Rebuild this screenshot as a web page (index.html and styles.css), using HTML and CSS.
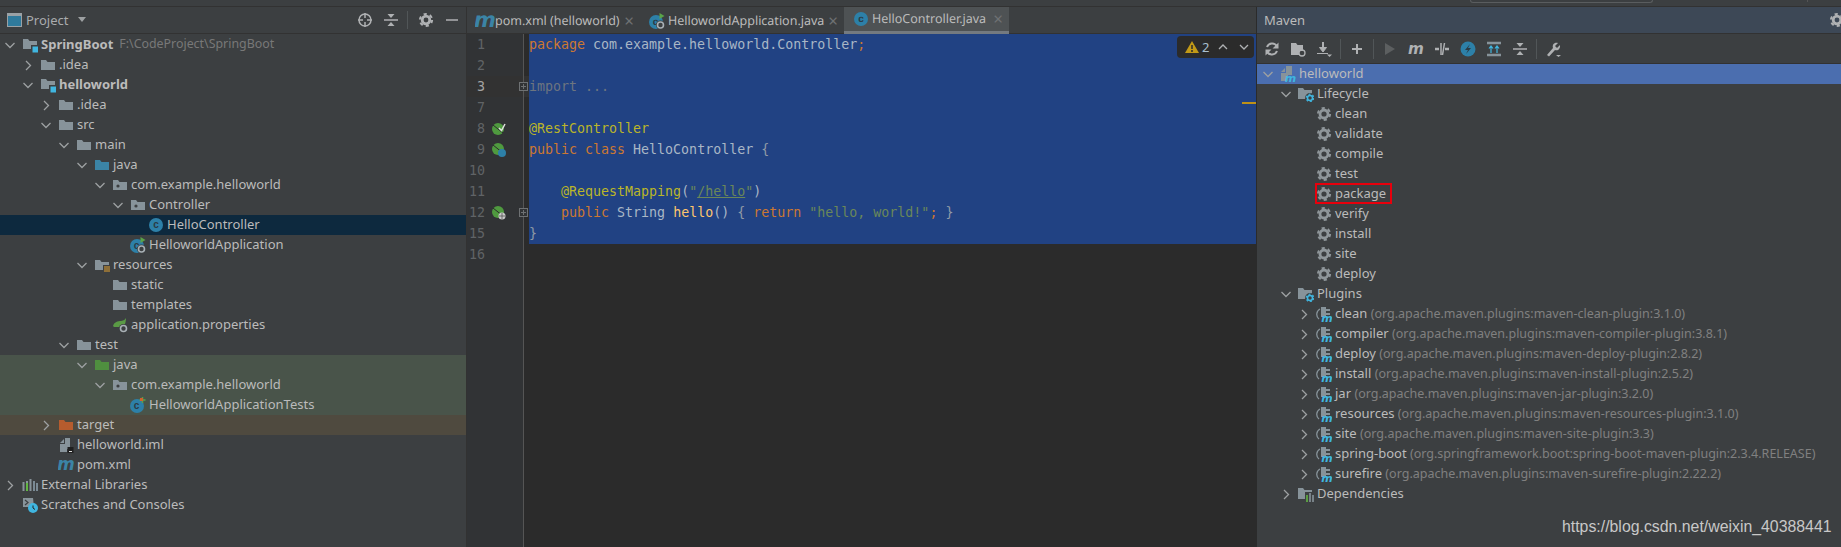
FILE: index.html
```html
<!DOCTYPE html>
<html lang="en">
<head>
<meta charset="utf-8">
<title>HelloController.java</title>
<link rel="stylesheet" href="styles.css">
</head>
<body>
<svg class="defs" xmlns="http://www.w3.org/2000/svg">
  <symbol id="cr" viewBox="0 0 16 16"><path d="M6 4l4.5 4.5L6 13" fill="none" stroke="#9da0a2" stroke-width="1.3"/></symbol>
  <symbol id="cd" viewBox="0 0 16 16"><path d="M3.5 6l4.5 4.5L12.500 6" fill="none" stroke="#9da0a2" stroke-width="1.3"/></symbol>
  <symbol id="folder" viewBox="0 0 16 16"><path d="M1 3h5l1.500 2H15v8H1z" fill="#87939a"/></symbol>
  <symbol id="fblue" viewBox="0 0 16 16"><path d="M1 3h5l1.500 2H15v8H1z" fill="#3b84a6"/></symbol>
  <symbol id="fgreen" viewBox="0 0 16 16"><path d="M1 3h5l1.500 2H15v8H1z" fill="#4f8f3f"/></symbol>
  <symbol id="forange" viewBox="0 0 16 16"><path d="M1 3h5l1.500 2H15v8H1z" fill="#b65c2e"/></symbol>
  <symbol id="pkg" viewBox="0 0 16 16"><path d="M1 3h5l1.500 2H15v8H1z" fill="#87939a"/><circle cx="6" cy="9" r="1.600" fill="#3c3f41"/></symbol>
  <symbol id="module" viewBox="0 0 16 16"><path d="M1 2h5l1.500 2H15v8H1z" fill="#87939a"/><rect x="9" y="8" width="8" height="8" fill="#3c3f41"/><rect x="10.500" y="9.500" width="6" height="6" fill="#40b6e0"/></symbol>
  <symbol id="res" viewBox="0 0 16 16"><path d="M1 3h5l1.500 2H15v8H1z" fill="#87939a"/><rect x="9" y="8" width="8" height="8" fill="#3c3f41"/><path d="M10 10h6M10 12h6M10 14h6" stroke="#e0a030" stroke-width="1"/></symbol>
  <symbol id="cls" viewBox="0 0 16 16"><circle cx="8" cy="8" r="7" fill="#2d80a8"/><text x="8" y="11" text-anchor="middle" font-size="10" font-family="Liberation Sans,sans-serif" font-weight="bold" fill="#2b3b45">c</text></symbol>
  <symbol id="clsrun" viewBox="0 0 16 16"><circle cx="7" cy="9" r="7" fill="#2d80a8"/><text x="6.500" y="12" text-anchor="middle" font-size="10" font-family="Liberation Sans,sans-serif" font-weight="bold" fill="#2b3b45">c</text><path d="M10.500 0l5 3-5 3z" fill="#5aa34a"/><circle cx="11.500" cy="12" r="4.500" fill="#3c3f41"/><circle cx="11.500" cy="12" r="3" fill="none" stroke="#a8b0b5" stroke-width="1.600"/></symbol>
  <symbol id="clstest" viewBox="0 0 16 16"><circle cx="7" cy="9" r="7" fill="#2d80a8"/><text x="6.500" y="12" text-anchor="middle" font-size="10" font-family="Liberation Sans,sans-serif" font-weight="bold" fill="#2b3b45">c</text><path d="M9.500 3h6M12.500 0v6" stroke="#5aa34a" stroke-width="1.500"/><rect x="10" y="1" width="3" height="3" fill="#d0622e"/></symbol>
  <symbol id="spring" viewBox="0 0 16 16"><path d="M1 9c1-4 5-5 8-5 3-.5 4-1.500 5-3 0 4-1 9-5 9H2z" fill="#5a9a45"/><circle cx="11.500" cy="11.500" r="4.500" fill="#3c3f41"/><circle cx="11.500" cy="11.500" r="3" fill="none" stroke="#a8b0b5" stroke-width="1.600"/></symbol>
  <symbol id="iml" viewBox="0 0 16 16"><path d="M2 6l4-4v4zM7 1h5v11H9v3H2V7h5z" fill="#87939a"/><rect x="9.500" y="10" width="6" height="6" fill="#1f1f1f"/><path d="M11 14.500h3" stroke="#ddd"/></symbol>
  <symbol id="m" viewBox="0 0 20 16"><text x="10" y="14" text-anchor="middle" font-size="21" font-family="DejaVu Sans,sans-serif" font-style="italic" font-weight="bold" fill="#3b84a6">m</text></symbol>
  <symbol id="libs" viewBox="0 0 16 16"><path d="M1.500 5v9M5 4v10M8.500 2v12" stroke="#87939a" stroke-width="2"/><path d="M5 6v8" stroke="#62b543" stroke-width="2"/><path d="M12 4v10M15 6v8" stroke="#7a8a94" stroke-width="2"/></symbol>
  <symbol id="scr" viewBox="0 0 16 16"><path d="M1 1h10l1 9H1z" fill="#87939a"/><path d="M3 3l3 2.500L3 8" fill="none" stroke="#3c3f41" stroke-width="1.200"/></symbol>
  <symbol id="gear" viewBox="0 0 16 16"><circle cx="8" cy="8" r="4" fill="none" stroke="#8f969a" stroke-width="2.800"/><circle cx="8" cy="8" r="6.100" fill="none" stroke="#8f969a" stroke-width="2" stroke-dasharray="3.200 3.190"/></symbol>
  <symbol id="lc" viewBox="0 0 16 16"><path d="M0 2h5l1.500 2H14v9H0z" fill="#87939a"/><circle cx="12" cy="12" r="5" fill="#3c3f41"/><circle cx="12" cy="12" r="2.500" fill="none" stroke="#40b6e0" stroke-width="1.500"/><circle cx="12" cy="12" r="3.800" fill="none" stroke="#40b6e0" stroke-width="1.200" stroke-dasharray="2 2"/></symbol>
  <symbol id="dep" viewBox="0 0 16 16"><path d="M0 2h5l1.500 2H14v9H0z" fill="#87939a"/><rect x="7" y="6" width="9" height="10" fill="#3c3f41"/><path d="M9 9v7" stroke="#62b543" stroke-width="1.600"/><path d="M12 7v9M15 9v7" stroke="#87939a" stroke-width="1.600"/></symbol>
  <symbol id="mod" viewBox="0 0 16 16"><path d="M1 6l4-4v4zM6 0h6v9H8v6H1V7h5z" fill="#87939a"/><text x="10.500" y="15.500" text-anchor="middle" font-size="11" font-family="DejaVu Sans,sans-serif" font-style="italic" font-weight="bold" fill="#40b6e0">m</text></symbol>
  <symbol id="plug" viewBox="0 0 16 16"><path d="M4 3a6 6 0 0 0-1 10" fill="none" stroke="#87939a" stroke-width="1.300"/><path d="M5 1h5v2h4v2h-4v2h4v2h-4v2H5z" fill="#87939a"/><text x="11" y="16" text-anchor="middle" font-size="11" font-family="DejaVu Sans,sans-serif" font-style="italic" font-weight="bold" fill="#40b6e0">m</text></symbol>
  <symbol id="wingear" viewBox="0 0 16 16"><circle cx="8" cy="8" r="3.800" fill="none" stroke="#afb1b3" stroke-width="2.800"/><circle cx="8" cy="8" r="6.100" fill="none" stroke="#afb1b3" stroke-width="2" stroke-dasharray="3.200 3.190"/></symbol>
  <symbol id="collapse" viewBox="0 0 16 16"><path d="M1 8h14" stroke="#afb1b3" stroke-width="1.500"/><path d="M8 6L4.500 2h7zM8 10l-3.500 4h7z" fill="#afb1b3"/></symbol>
  <symbol id="sync" viewBox="0 0 16 16"><path d="M13 5.500A5.500 5.500 0 0 0 3 6M3 10.500A5.500 5.500 0 0 0 13 10" fill="none" stroke="#afb1b3" stroke-width="2"/><path d="M14.500 1.500v6h-6zM1.500 14.500v-6h6z" fill="#afb1b3"/></symbol>
  <symbol id="gut1" viewBox="0 0 14 14"><circle cx="6" cy="7" r="6" fill="#4f9a3f"/><path d="M1 3l10 8" stroke="#2b2b2b" stroke-width="1"/><path d="M7 6l2.500 2.500L13 2" fill="none" stroke="#e0e0e0" stroke-width="1.500"/></symbol>
  <symbol id="gut2" viewBox="0 0 14 14"><circle cx="6" cy="6" r="6" fill="#4f9a3f"/><path d="M1 2l10 8" stroke="#2b2b2b" stroke-width="1"/><circle cx="10" cy="10" r="4" fill="#2d80a8"/></symbol>
  <symbol id="gut3" viewBox="0 0 14 14"><circle cx="6" cy="6" r="6" fill="#4f9a3f"/><path d="M1 2l10 8" stroke="#2b2b2b" stroke-width="1"/><circle cx="10" cy="10" r="3.500" fill="#c8c8c8"/><path d="M7 10h6M10 7v6" stroke="#555" stroke-width=".8"/></symbol>
</svg>

<div class="strip"><span class="searchbox"></span><span class="tick"></span></div>
<div class="main">
  <aside class="project">
    <header class="phead">
      <svg class="winicon" width="15" height="14" viewBox="0 0 15 14"><rect x=".5" y=".5" width="14" height="13" fill="#2f7a9c" stroke="#9aa1a5"/><rect x="1" y="1" width="13" height="2" fill="#9aa1a5"/></svg>
      <span class="ptitle">Project</span>
      <svg class="caret" width="10" height="6" viewBox="0 0 10 6"><path d="M1 0h8L5 5z" fill="#9da0a2"/></svg>
      <span class="grow"></span>
      <svg class="hbtn" width="16" height="16" viewBox="0 0 16 16"><circle cx="8" cy="8" r="6" fill="none" stroke="#afb1b3" stroke-width="1.500"/><path d="M8 1v5M8 10v5M1 8h5M10 8h5" stroke="#afb1b3" stroke-width="1.500"/></svg>
      <svg class="hbtn" width="16" height="16"><use href="#collapse"/></svg>
      <span class="hsep"></span>
      <svg class="hbtn" width="16" height="16"><use href="#wingear"/></svg>
      <svg class="hbtn" width="16" height="16" viewBox="0 0 16 16"><path d="M2 8h12" stroke="#afb1b3" stroke-width="1.500"/></svg>
    </header>
    <div class="ptree">
      <div class="row d0"><svg class="ar"><use href="#cd"/></svg><svg class="ic"><use href="#module"/></svg><b>SpringBoot</b><span class="path">F:\CodeProject\SpringBoot</span></div>
      <div class="row d1"><svg class="ar"><use href="#cr"/></svg><svg class="ic"><use href="#folder"/></svg><span>.idea</span></div>
      <div class="row d1"><svg class="ar"><use href="#cd"/></svg><svg class="ic"><use href="#module"/></svg><b>helloworld</b></div>
      <div class="row d2"><svg class="ar"><use href="#cr"/></svg><svg class="ic"><use href="#folder"/></svg><span>.idea</span></div>
      <div class="row d2"><svg class="ar"><use href="#cd"/></svg><svg class="ic"><use href="#folder"/></svg><span>src</span></div>
      <div class="row d3"><svg class="ar"><use href="#cd"/></svg><svg class="ic"><use href="#folder"/></svg><span>main</span></div>
      <div class="row d4"><svg class="ar"><use href="#cd"/></svg><svg class="ic"><use href="#fblue"/></svg><span>java</span></div>
      <div class="row d5"><svg class="ar"><use href="#cd"/></svg><svg class="ic"><use href="#pkg"/></svg><span>com.example.helloworld</span></div>
      <div class="row d6"><svg class="ar"><use href="#cd"/></svg><svg class="ic"><use href="#pkg"/></svg><span>Controller</span></div>
      <div class="row d7 selrow"><i class="ar"></i><svg class="ic"><use href="#cls"/></svg><span>HelloController</span></div>
      <div class="row d6"><i class="ar"></i><svg class="ic"><use href="#clsrun"/></svg><span>HelloworldApplication</span></div>
      <div class="row d4"><svg class="ar"><use href="#cd"/></svg><svg class="ic"><use href="#res"/></svg><span>resources</span></div>
      <div class="row d5"><i class="ar"></i><svg class="ic"><use href="#folder"/></svg><span>static</span></div>
      <div class="row d5"><i class="ar"></i><svg class="ic"><use href="#folder"/></svg><span>templates</span></div>
      <div class="row d5"><i class="ar"></i><svg class="ic"><use href="#spring"/></svg><span>application.properties</span></div>
      <div class="row d3"><svg class="ar"><use href="#cd"/></svg><svg class="ic"><use href="#folder"/></svg><span>test</span></div>
      <div class="row d4 testrow"><svg class="ar"><use href="#cd"/></svg><svg class="ic"><use href="#fgreen"/></svg><span>java</span></div>
      <div class="row d5 testrow"><svg class="ar"><use href="#cd"/></svg><svg class="ic"><use href="#pkg"/></svg><span>com.example.helloworld</span></div>
      <div class="row d6 testrow"><i class="ar"></i><svg class="ic"><use href="#clstest"/></svg><span>HelloworldApplicationTests</span></div>
      <div class="row d2 excrow"><svg class="ar"><use href="#cr"/></svg><svg class="ic"><use href="#forange"/></svg><span>target</span></div>
      <div class="row d2"><i class="ar"></i><svg class="ic"><use href="#iml"/></svg><span>helloworld.iml</span></div>
      <div class="row d2"><i class="ar"></i><svg class="ic"><use href="#m"/></svg><span>pom.xml</span></div>
      <div class="row d0"><svg class="ar"><use href="#cr"/></svg><svg class="ic"><use href="#libs"/></svg><span>External Libraries</span></div>
      <div class="row d0"><i class="ar"></i><svg class="ic wide"><use href="#scr"/><circle cx="11" cy="11" r="5" fill="#40b6e0"/><path d="M11 8.500V11l2 1.500" fill="none" stroke="#222" stroke-width="1"/></svg><span>Scratches and Consoles</span></div>
    </div>
  </aside>

  <section class="editor">
    <nav class="tabs">
      <div class="tab tab1"><svg class="tabm"><use href="#m"/></svg><span>pom.xml (helloworld)</span><span class="x">×</span></div>
      <div class="tab tab2"><svg class="ic"><use href="#clsrun"/></svg><span>HelloworldApplication.java</span><span class="x">×</span></div>
      <div class="tab tab3 active"><svg class="ic"><use href="#cls"/></svg><span>HelloController.java</span><span class="x">×</span></div>
    </nav>
    <div class="edit">
      <div class="gutter">
        <div class="gl"><span class="ln">1</span></div>
        <div class="gl"><span class="ln">2</span></div>
        <div class="gl cur"><span class="ln">3</span><span class="fold"></span></div>
        <div class="gl"><span class="ln">7</span></div>
        <div class="gl"><span class="ln">8</span><svg class="gi"><use href="#gut1"/></svg></div>
        <div class="gl"><span class="ln">9</span><svg class="gi"><use href="#gut2"/></svg></div>
        <div class="gl"><span class="ln">10</span></div>
        <div class="gl"><span class="ln">11</span></div>
        <div class="gl"><span class="ln">12</span><svg class="gi"><use href="#gut3"/></svg><span class="fold"></span></div>
        <div class="gl"><span class="ln">15</span></div>
        <div class="gl"><span class="ln">16</span></div>
      </div>
      <div class="code">
        <div class="sel">
<div class="cl"><span class="kw">package</span> com.example.helloworld.Controller<span class="kw">;</span></div>
<div class="cl"></div>
<div class="cl"><span class="dim">import ...</span></div>
<div class="cl"></div>
<div class="cl"><span class="an">@RestController</span></div>
<div class="cl"><span class="kw">public class</span> HelloController <span class="br">{</span></div>
<div class="cl"></div>
<div class="cl">    <span class="an">@RequestMapping</span>(<span class="st">"<u>/hello</u>"</span>)</div>
<div class="cl">    <span class="kw">public</span> String <span class="fn">hello</span>() <span class="br">{</span> <span class="kw">return</span> <span class="st">"hello, world!"</span><span class="kw">;</span> <span class="br">}</span></div>
<div class="cl"><span class="br">}</span></div>
        </div>
      </div>
      <div class="warn">
        <svg width="14" height="12" viewBox="0 0 14 12"><path d="M7 0l7 12H0z" fill="#c29a17"/><path d="M7 4v4M7 9v2" stroke="#2b2b2b" stroke-width="1.500"/></svg>
        <span class="wn">2</span>
        <svg class="wup" width="10" height="6" viewBox="0 0 10 6"><path d="M1 5l4-4 4 4" fill="none" stroke="#afb1b3" stroke-width="1.300"/></svg>
        <svg class="wdn" width="10" height="6" viewBox="0 0 10 6"><path d="M1 1l4 4 4-4" fill="none" stroke="#afb1b3" stroke-width="1.300"/></svg>
      </div>
      <span class="mark"></span>
    </div>
  </section>

  <aside class="maven">
    <header class="mhead"><span>Maven</span><span class="grow"></span><svg class="mgear" width="16" height="16"><use href="#wingear"/></svg></header>
    <div class="mtools">
      <svg class="tb"><use href="#sync"/></svg>
      <svg class="tb" viewBox="0 0 16 16"><path d="M1 2h5l1.500 2H13v6H9v4H1z" fill="#afb1b3"/><circle cx="12" cy="12" r="3" fill="none" stroke="#afb1b3" stroke-width="1.300"/></svg>
      <svg class="tb" viewBox="0 0 16 16"><path d="M7 1v8" stroke="#afb1b3" stroke-width="2"/><path d="M3.500 6.500h7L7 11zM1 12.500h11" stroke="#afb1b3" fill="#afb1b3"/><path d="M11 13.500h5L13.500 16z" fill="#afb1b3"/></svg>
      <span class="tsep"></span>
      <svg class="tb" viewBox="0 0 16 16"><path d="M8 3v10M3 8h10" stroke="#afb1b3" stroke-width="2"/></svg>
      <span class="tsep"></span>
      <svg class="tb" viewBox="0 0 16 16"><path d="M3 2l10 6-10 6z" fill="#5c5f60"/></svg>
      <svg class="tb" viewBox="0 0 20 16"><text x="10" y="14" text-anchor="middle" font-size="19" font-family="DejaVu Sans,sans-serif" font-style="italic" font-weight="bold" fill="#afb1b3">m</text></svg>
      <svg class="tb" viewBox="0 0 16 16"><path d="M1 8h4M11 8h4" stroke="#afb1b3" stroke-width="2.500"/><path d="M7 2v12M10.500 2L8.500 14" stroke="#afb1b3" stroke-width="1.500"/></svg>
      <svg class="tb" viewBox="0 0 16 16"><circle cx="8" cy="8" r="7.500" fill="#2d80a8"/><path d="M10 3L5 9h3l-2 4 5-6H8z" fill="#2b3b45"/></svg>
      <svg class="tb" viewBox="0 0 16 16"><path d="M1 2h14M1 14h14" stroke="#87939a" stroke-width="2.500"/><path d="M5 12V6M3 7.500L5 5l2 2.500M11 12V6M9 7.500L11 5l2 2.500" fill="none" stroke="#40b6e0" stroke-width="1.200"/></svg>
      <svg class="tb"><use href="#collapse"/></svg>
      <span class="tsep"></span>
      <svg class="tb" viewBox="0 0 16 16"><path d="M2 14l6-7c-1-3 1-6 5-5l-3 3 2 2 3-3c.5 4-2 6-5 5l-6 6.500z" fill="#afb1b3"/><path d="M11 14h5l-2.500 2z" fill="#afb1b3"/></svg>
    </div>
    <div class="mtree">
      <div class="row m0 msel"><svg class="ar"><use href="#cd"/></svg><svg class="ic"><use href="#mod"/></svg><span>helloworld</span></div>
      <div class="row m1"><svg class="ar"><use href="#cd"/></svg><svg class="ic"><use href="#lc"/></svg><span>Lifecycle</span></div>
      <div class="row m2"><i class="ar"></i><svg class="ic"><use href="#gear"/></svg><span>clean</span></div>
      <div class="row m2"><i class="ar"></i><svg class="ic"><use href="#gear"/></svg><span>validate</span></div>
      <div class="row m2"><i class="ar"></i><svg class="ic"><use href="#gear"/></svg><span>compile</span></div>
      <div class="row m2"><i class="ar"></i><svg class="ic"><use href="#gear"/></svg><span>test</span></div>
      <div class="row m2"><i class="ar"></i><svg class="ic"><use href="#gear"/></svg><span>package</span><em class="redbox"></em></div>
      <div class="row m2"><i class="ar"></i><svg class="ic"><use href="#gear"/></svg><span>verify</span></div>
      <div class="row m2"><i class="ar"></i><svg class="ic"><use href="#gear"/></svg><span>install</span></div>
      <div class="row m2"><i class="ar"></i><svg class="ic"><use href="#gear"/></svg><span>site</span></div>
      <div class="row m2"><i class="ar"></i><svg class="ic"><use href="#gear"/></svg><span>deploy</span></div>
      <div class="row m1"><svg class="ar"><use href="#cd"/></svg><svg class="ic"><use href="#lc"/></svg><span>Plugins</span></div>
      <div class="row m2"><svg class="ar"><use href="#cr"/></svg><svg class="ic"><use href="#plug"/></svg><span>clean <small>(org.apache.maven.plugins:maven-clean-plugin:3.1.0)</small></span></div>
      <div class="row m2"><svg class="ar"><use href="#cr"/></svg><svg class="ic"><use href="#plug"/></svg><span>compiler <small>(org.apache.maven.plugins:maven-compiler-plugin:3.8.1)</small></span></div>
      <div class="row m2"><svg class="ar"><use href="#cr"/></svg><svg class="ic"><use href="#plug"/></svg><span>deploy <small>(org.apache.maven.plugins:maven-deploy-plugin:2.8.2)</small></span></div>
      <div class="row m2"><svg class="ar"><use href="#cr"/></svg><svg class="ic"><use href="#plug"/></svg><span>install <small>(org.apache.maven.plugins:maven-install-plugin:2.5.2)</small></span></div>
      <div class="row m2"><svg class="ar"><use href="#cr"/></svg><svg class="ic"><use href="#plug"/></svg><span>jar <small>(org.apache.maven.plugins:maven-jar-plugin:3.2.0)</small></span></div>
      <div class="row m2"><svg class="ar"><use href="#cr"/></svg><svg class="ic"><use href="#plug"/></svg><span>resources <small>(org.apache.maven.plugins:maven-resources-plugin:3.1.0)</small></span></div>
      <div class="row m2"><svg class="ar"><use href="#cr"/></svg><svg class="ic"><use href="#plug"/></svg><span>site <small>(org.apache.maven.plugins:maven-site-plugin:3.3)</small></span></div>
      <div class="row m2"><svg class="ar"><use href="#cr"/></svg><svg class="ic"><use href="#plug"/></svg><span>spring-boot <small>(org.springframework.boot:spring-boot-maven-plugin:2.3.4.RELEASE)</small></span></div>
      <div class="row m2"><svg class="ar"><use href="#cr"/></svg><svg class="ic"><use href="#plug"/></svg><span>surefire <small>(org.apache.maven.plugins:maven-surefire-plugin:2.22.2)</small></span></div>
      <div class="row m1"><svg class="ar"><use href="#cr"/></svg><svg class="ic"><use href="#dep"/></svg><span>Dependencies</span></div>
    </div>
    <span class="watermark">https://blog.csdn.net/weixin_40388441</span>
  </aside>
</div>
</body>
</html>
```
FILE: styles.css
```css
* { box-sizing: border-box; }
html, body { margin: 0; height: 547px; width: 1841px; overflow: hidden; }
body { background: #3c3f41; color: #bbbbbb; font: 13px/20px "Noto Sans", sans-serif; }
.defs { display: none; }
.grow { flex: 1; }

.strip { height: 7px; border-bottom: 1px solid #323232; display: flex; align-items: flex-start; }
.searchbox { margin-left: 1470px; width: 183px; height: 3px; border: 1px solid #5a5d5f; border-top: 0; border-radius: 0 0 3px 3px; }
.tick { margin-left: 154px; width: 1px; height: 2px; background: #555; }
.main { display: flex; height: 540px; }

.project { width: 467px; border-right: 1px solid #323232; flex: none; }
.phead { height: 27px; border-bottom: 1px solid #323232; display: flex; align-items: center; padding: 0 6px 0 7px; }
.winicon { margin-right: 4px; }
.ptitle { color: #a9abad; }
.caret { margin-left: 9px; }
.hbtn { margin-left: 10px; }
.hsep { width: 1px; height: 18px; background: #515658; margin: 0 0 0 8px; }
.ptree { padding-top: 1px; }

.row { display: flex; align-items: center; height: 20px; white-space: pre; position: relative; }
.row > span, .row > b { margin-bottom: 2px; }
.ar { width: 16px; height: 16px; margin-right: 4px; flex: none; }
.ic { width: 16px; height: 16px; margin-right: 3px; flex: none; overflow: visible; }
.d0 { padding-left: 2px; }
.d1 { padding-left: 20px; }
.d2 { padding-left: 38px; }
.d3 { padding-left: 56px; }
.d4 { padding-left: 74px; }
.d5 { padding-left: 92px; }
.d6 { padding-left: 110px; }
.d7 { padding-left: 128px; }
.path { color: #787878; margin-left: 6px; font-size: 12.4px; }
.selrow { background: #0d293e; }
.testrow { background: #49544a; }
.excrow { background: #4f4a3f; }
.row b { font-weight: 700; }

.editor { width: 790px; flex: none; border-right: 1px solid #2b2b2b; display: flex; flex-direction: column; }
.tabs { height: 27px; display: flex; border-bottom: 1px solid #323232; font-size: 12.5px; text-rendering: geometricPrecision; }
.tab { display: flex; align-items: center; height: 27px; flex: none; white-space: nowrap; }
.tab1 { width: 173px; padding-left: 8px; }
.tab2 { width: 204px; padding-left: 9px; }
.tab3 { width: 165px; padding-left: 9px; }
.tabm { width: 20px; height: 16px; flex: none; }
.tab .x { color: #6e7173; font-size: 17px; margin-left: auto; margin-right: 6px; }
.active { background: #4e5254; border-bottom: 3px solid #747a80; }
.edit { flex: 1; display: flex; background: #2b2b2b; position: relative; font: 13.3px/21px "DejaVu Sans Mono", monospace; }
.gutter { width: 62px; flex: none; position: relative; background: linear-gradient(90deg, #313335 56px, #2b2b2b 56px); }
.gutter::after { content: ""; position: absolute; left: 56px; top: 0; bottom: 0; width: 1px; background: #555; }
.gl { height: 21px; display: flex; align-items: center; position: relative; }
.cur { background: #323232; }
.ln { width: 18px; text-align: right; color: #606366; flex: none; }
.cur .ln { color: #a4a3a3; }
.gi { width: 14px; height: 14px; margin-left: 7px; flex: none; }
.fold { position: absolute; left: 52px; top: 6px; width: 9px; height: 9px; border: 1px solid #6e7173; background: linear-gradient(#6e7173, #6e7173) center / 5px 1px no-repeat, linear-gradient(#6e7173, #6e7173) center / 1px 5px no-repeat, #313335; z-index: 1; }
.code { flex: 1; }
.sel { background: #214283; color: #a9b7c6; }
.cl { height: 21px; white-space: pre; }
.kw { color: #cc7832; }
.an { color: #bbb529; }
.st { color: #6a8759; }
.fn { color: #ffc66d; }
.dim { color: #6d7580; }
.br { color: #8f9aa6; }
.warn { position: absolute; left: 710px; top: 2px; width: 77px; height: 22px; background: #2b2b2b; border-radius: 4px; display: flex; align-items: center; padding-left: 8px; font: 13px/22px "Noto Sans", sans-serif; color: #a9c0d0; }
.wn { margin-left: 3px; }
.wup { margin-left: 9px; }
.wdn { margin-left: 11px; }
.mark { position: absolute; right: 0; top: 68px; width: 14px; height: 2px; background: #be9117; }

.maven { flex: 1; position: relative; min-width: 0; overflow: hidden; }
.mhead { height: 27px; background: #3d4856; border-bottom: 1px solid #323232; display: flex; align-items: center; padding-left: 7px; }
.mgear { margin-right: -4px; flex: none; }
.mtools { height: 30px; border-bottom: 1px solid #323232; display: flex; align-items: center; padding-left: 2px; }
.tb { width: 16px; height: 16px; margin: 0 5px; flex: none; }
.tsep { width: 1px; height: 20px; background: #515658; flex: none; margin: 0 3px; }
.m0 { padding-left: 3px; }
.m1 { padding-left: 21px; }
.m2 { padding-left: 39px; }
.msel { background: #4b6eaf; }
small { font-size: 12.5px; color: #808080; }
.redbox { position: absolute; left: 58px; top: -1px; width: 77px; height: 21px; border: 2px solid #e8000c; }
.watermark { position: absolute; left: 305px; top: 510px; font: 15.85px/20px "Liberation Sans", sans-serif; color: #c8c8c8; white-space: nowrap; }
```
